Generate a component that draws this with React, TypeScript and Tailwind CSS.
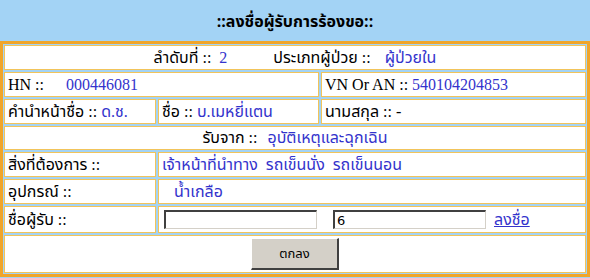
import React from "react";

const blue = "text-[#3333cc]";

function Cell({ children, className = "" }: { children?: React.ReactNode; className?: string }) {
  return (
    <div className={"bg-white border border-[#f2c45a] flex items-center px-[3px] " + className}>
      {children}
    </div>
  );
}

export default function App() {
  return (
    <div
      className="w-[590px] h-[278px] bg-[#a3d3f5] text-black text-[16px] leading-[20px]"
      style={{ fontFamily: '"Liberation Serif", "Noto Sans Thai", Tahoma, serif' }}
    >
      <div className="h-[41px] flex items-center justify-center font-bold text-[16px] pt-[2px]" style={{ fontFamily: 'Tahoma, "Noto Sans Thai", "DejaVu Sans", sans-serif' }}>
        ::ลงชื่อผู้รับการร้องขอ::
      </div>
      <div className="border-[3px] border-[#f0a52a] bg-[#a3d3f5] p-[1px] flex flex-col gap-[2px] w-[590px] h-[236px]">
        <Cell className="h-[25px] justify-center">
          <span>ลำดับที่ ::</span>
          <span className={blue + " ml-[8px]"}>2</span>
          <span className="ml-[46px]">ประเภทผู้ป่วย ::</span>
          <span className={blue + " ml-[14px]"}>ผู้ป่วยใน</span>
        </Cell>
        <div className="flex gap-[2px] h-[25px]">
          <Cell className="w-[315px]">
            <span>HN ::</span>
            <span className={blue + " ml-[22px]"}>000446081</span>
          </Cell>
          <Cell className="flex-1">
            <span>VN Or AN ::</span>
            <span className={blue + " ml-[4px]"}>540104204853</span>
          </Cell>
        </div>
        <div className="flex gap-[2px] h-[25px]">
          <Cell className="w-[152px]">
            <span>คำนำหน้าชื่อ ::</span>
            <span className={blue + " ml-[4px]"}>ด.ช.</span>
          </Cell>
          <Cell className="w-[161px]">
            <span>ชื่อ ::</span>
            <span className={blue + " ml-[4px]"}>บ.เมหยี่แตน</span>
          </Cell>
          <Cell className="flex-1">
            <span>นามสกุล ::</span>
            <span className="ml-[4px]">-</span>
          </Cell>
        </div>
        <Cell className="h-[24px] justify-center">
          <span>รับจาก ::</span>
          <span className={blue + " ml-[10px]"}>อุบัติเหตุและฉุกเฉิน</span>
        </Cell>
        <div className="flex gap-[2px] h-[25px]">
          <Cell className="w-[152px]">
            <span>สิ่งที่ต้องการ ::</span>
          </Cell>
          <Cell className="flex-1">
            <span className={blue}>เจ้าหน้าที่นำทาง&nbsp; รถเข็นนั่ง&nbsp; รถเข็นนอน</span>
          </Cell>
        </div>
        <div className="flex gap-[2px] h-[25px]">
          <Cell className="w-[152px]">
            <span>อุปกรณ์ ::</span>
          </Cell>
          <Cell className="flex-1">
            <span className={blue + " ml-[12px]"}>น้ำเกลือ</span>
          </Cell>
        </div>
        <div className="flex gap-[2px] h-[27px]">
          <Cell className="w-[152px]">
            <span>ชื่อผู้รับ ::</span>
          </Cell>
          <Cell className="flex-1">
            <input
              type="text"
              defaultValue=""
              className="ml-[2px] w-[153px] h-[19px] bg-white border-t-[2px] border-l-[2px] border-b border-r border-t-[#404040] border-l-[#404040] border-b-[#d4d0c8] border-r-[#d4d0c8] outline-none text-[13px] px-[2px]"
            />
            <input
              type="text"
              defaultValue="6"
              className="ml-[16px] w-[153px] h-[19px] bg-white border-t-[2px] border-l-[2px] border-b border-r border-t-[#404040] border-l-[#404040] border-b-[#d4d0c8] border-r-[#d4d0c8] outline-none text-[13px] px-[2px] leading-[15px]"
              style={{ fontFamily: '"DejaVu Sans", sans-serif' }}
            />
            <a href="#" className={"ml-[8px] underline " + blue}>ลงชื่อ</a>
          </Cell>
        </div>
        <Cell className="flex-1 justify-center">
          <button
            className="w-[88px] h-[32px] bg-[#d4d0c8] border-t border-l border-t-white border-l-white border-b-[2px] border-r-[2px] border-b-[#404040] border-r-[#404040] text-[13px]"
            style={{ fontFamily: 'Tahoma, "Noto Sans Thai", "DejaVu Sans", sans-serif' }}
          >
            ตกลง
          </button>
        </Cell>
      </div>
    </div>
  );
}
